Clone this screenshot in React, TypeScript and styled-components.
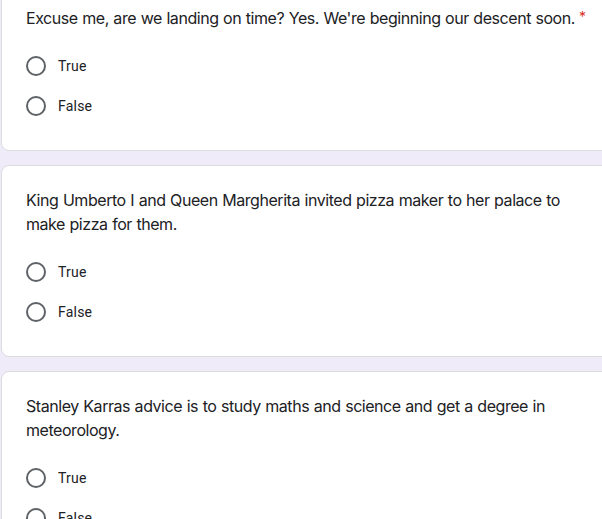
import React from 'react';
import styled, {createGlobalStyle} from 'styled-components';

const GlobalStyle = createGlobalStyle`
  html, body {
    margin: 0;
    padding: 0;
    background: #f0ebf8;
    overflow: hidden;
  }
`;

const Page = styled.div`
  width: 602px;
  height: 519px;
  overflow: hidden;
  background: #f0ebf8;
`;

const List = styled.div`
  display: flex;
  flex-direction: column;
  gap: 14px;
  margin-top: -18px;
  padding-left: 1px;
`;

const Card = styled.div`
  width: 640px;
  box-sizing: border-box;
  background: #fff;
  border: 1px solid #dadce0;
  border-radius: 8px;
  padding: 22px 24px 24px 24px;
  display: flex;
  flex-direction: column;
  gap: 16px;
`;

const Question = styled.div`
  max-width: 570px;
  font-family: Inter, "Open Sans", sans-serif;
  font-size: 16px;
  line-height: 24px;
  color: #202124;
  letter-spacing: -0.45px;
  word-spacing: 0.5px;
`;

const Required = styled.span`
  color: #d93025;
  margin-left: 4px;
  font-size: 14px;
  vertical-align: 2px;
`;

const Options = styled.div`
  display: flex;
  flex-direction: column;
`;

const Option = styled.label`
  height: 40px;
  display: flex;
  align-items: center;
  gap: 12px;
  font-family: Roboto, "Liberation Sans", sans-serif;
  font-size: 14px;
  color: #202124;
  letter-spacing: 0.2px;
`;

const Radio = styled.span`
  width: 20px;
  height: 20px;
  box-sizing: border-box;
  border: 2px solid #5f6368;
  border-radius: 50%;
  flex-shrink: 0;
`;

type Item = {text: string; required?: boolean};

const items: Item[] = [
  {text: "Excuse me, are we landing on time? Yes. We're beginning our descent soon.", required: true},
  {text: 'King Umberto I and Queen Margherita invited pizza maker to her palace to make pizza for them.'},
  {text: 'Stanley Karras advice is to study maths and science and get a degree in meteorology.'},
];

const App: React.FC = () => {
  return (
    <Page>
      <GlobalStyle />
      <List>
        {items.map((item, i) => (
          <Card key={i}>
            <Question>
              {item.text}
              {item.required && <Required>*</Required>}
            </Question>
            <Options>
              {['True', 'False'].map((opt) => (
                <Option key={opt}>
                  <Radio />
                  {opt}
                </Option>
              ))}
            </Options>
          </Card>
        ))}
      </List>
    </Page>
  );
};

export default App;
